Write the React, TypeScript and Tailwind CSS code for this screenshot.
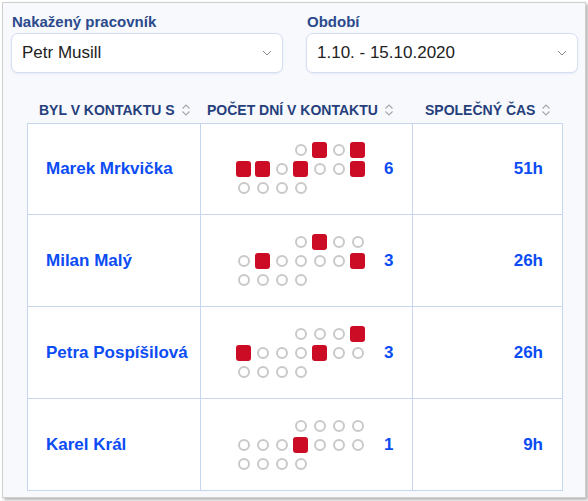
import React from "react";

const RED = "#cc0b25";

type Person = { name: string; days: number[]; count: number; time: string };

const people: Person[] = [
  { name: "Marek Mrkvička", days: [2, 4, 5, 6, 8, 11], count: 6, time: "51h" },
  { name: "Milan Malý", days: [2, 6, 11], count: 3, time: "26h" },
  { name: "Petra Pospíšilová", days: [4, 5, 9], count: 3, time: "26h" },
  { name: "Karel Král", days: [8], count: 1, time: "9h" },
];

function SortIcon() {
  return (
    <svg width="10" height="16" viewBox="0 0 10 16" className="ml-[6px] shrink-0">
      <path d="M1.5 6.5 L5 3 L8.5 6.5" fill="none" stroke="#a6a6a6" strokeWidth="1.1" />
      <path d="M1.5 9.5 L5 13 L8.5 9.5" fill="none" stroke="#a6a6a6" strokeWidth="1.1" />
    </svg>
  );
}

function Chevron() {
  return (
    <svg width="10" height="6" viewBox="0 0 10 6" className="shrink-0">
      <path d="M1 1 L5 5 L9 1" fill="none" stroke="#8a8a8a" strokeWidth="1" />
    </svg>
  );
}

function Select({ label, value }: { label: string; value: string }) {
  return (
    <div className="flex flex-col">
      <div className="text-[15px] font-bold text-[#2b4a8c] leading-[18px] pl-[1px] h-[20px]">{label}</div>
      <div className="w-[272px] h-[40px] bg-white border border-[#d3dff3] rounded-[7px] shadow-[0_1px_2px_rgba(40,70,140,0.08)] flex items-center justify-between pl-[10px] pr-[10px]">
        <span className="text-[17px] text-[#222]">{value}</span>
        <Chevron />
      </div>
    </div>
  );
}

function DayGrid({ days }: { days: number[] }) {
  const cells: (number | null)[] = [null, null, null];
  for (let d = 1; d <= 15; d++) cells.push(d);
  return (
    <div className="grid grid-cols-[repeat(7,19px)] grid-rows-[repeat(3,19px)]">
      {cells.map((d, i) => (
        <div key={i} className="flex items-center justify-center">
          {d === null ? null : days.includes(d) ? (
            <div className="w-[15px] h-[16px] rounded-[3px]" style={{ backgroundColor: RED }} />
          ) : (
            <div className="w-[12px] h-[12px] rounded-full border-2 border-[#c9c9c9]" />
          )}
        </div>
      ))}
    </div>
  );
}

export default function App() {
  return (
    <div className="w-[588px] h-[501px] bg-white" style={{ fontFamily: '"Liberation Sans", Arial, sans-serif' }}>
      <div className="absolute left-[2px] top-[2px] w-[584px] h-[496px] bg-[#f8f9fd] border border-[#cfcfcf] shadow-[2px_2px_3px_rgba(0,0,0,0.3)]">
        <div className="flex gap-[23px] pl-[8px] pt-[10px]">
          <Select label="Nakažený pracovník" value="Petr Musill" />
          <Select label="Období" value="1.10. - 15.10.2020" />
        </div>
        <div className="ml-[24px] mt-[24px] w-[536px]">
          <div className="grid grid-cols-[173px_212px_151px] h-[26px] items-center text-[14px] font-bold text-[#263f7c]">
            <div className="flex items-center pl-[12px]">BYL V KONTAKTU S<SortIcon /></div>
            <div className="flex items-center pl-[7px]">POČET DNÍ V KONTAKTU<SortIcon /></div>
            <div className="flex items-center pl-[13px]">SPOLEČNÝ ČAS<SortIcon /></div>
          </div>
          <div className="border border-[#c7d6ef] bg-white">
            {people.map((p, i) => (
              <div
                key={p.name}
                className={`grid grid-cols-[172px_212px_150px] ${i > 0 ? "h-[92px] border-t border-[#c7d6ef]" : "h-[90px]"}`}
              >
                <div className="flex items-center pl-[18px] text-[17px] font-bold text-[#0b4cf4]">{p.name}</div>
                <div className="flex items-center border-l border-[#c7d6ef] pl-[33px]">
                  <DayGrid days={p.days} />
                  <span className="ml-[17px] text-[17px] font-bold text-[#0b4cf4]">{p.count}</span>
                </div>
                <div className="flex items-center justify-end border-l border-[#c7d6ef] pr-[19px] text-[17px] font-bold text-[#0b4cf4]">
                  {p.time}
                </div>
              </div>
            ))}
          </div>
        </div>
      </div>
    </div>
  );
}
